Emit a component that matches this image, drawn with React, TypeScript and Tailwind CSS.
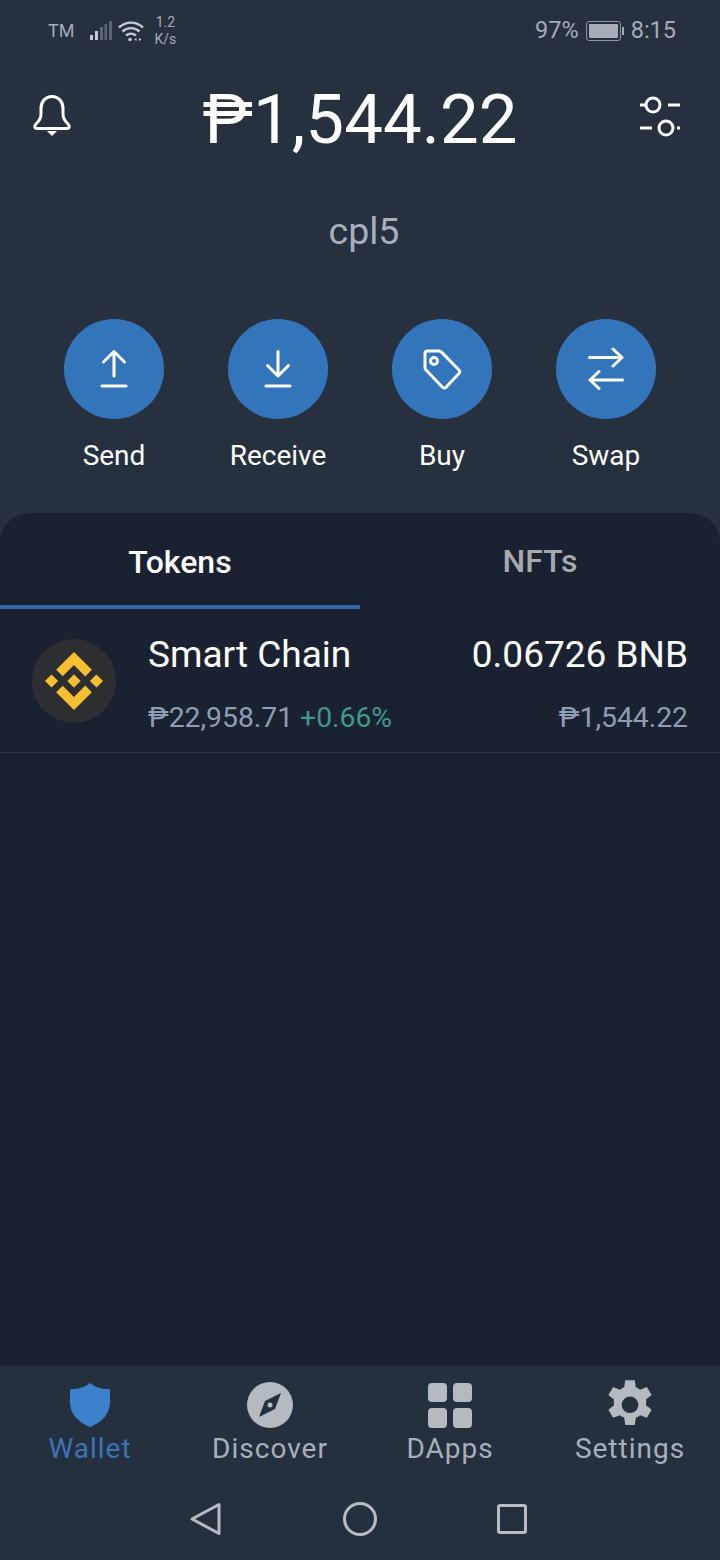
import React from "react";

const PESO = "\u20B1";

function Bell() {
  return (
    <svg width="40" height="50" viewBox="0 0 40 50" fill="none" stroke="white" strokeWidth="3" strokeLinejoin="round">
      <path d="M20 1.500c-6.500 0-11 5-11 12v6c0 4-2 6.500-5 9.500-2 2-1.500 4.500 1 4.500h30c2.500 0 3-2.500 1-4.500-3-3-5-5.500-5-9.500v-6c0-7-4.500-12-11-12z" />
      <path d="M15 36h10l-5 5z" fill="white" stroke="none" />
    </svg>
  );
}

function Sliders() {
  return (
    <svg width="40" height="50" viewBox="0 0 40 50" fill="none" stroke="white" strokeWidth="3">
      <circle cx="13" cy="10" r="7" />
      <path d="M0 10h5M28 10h12" />
      <circle cx="26" cy="33" r="7" />
      <path d="M0 33h12M37 33h3" />
    </svg>
  );
}

function ActionIcon({ kind }: { kind: string }) {
  return (
    <svg width="44" height="44" viewBox="0 0 44 44" fill="none" stroke="white" strokeWidth="3" strokeLinecap="round" strokeLinejoin="round">
      {kind === "send" && <path d="M22 4.500V29M11.500 15L22 4.500 32.500 15M10 39h24" />}
      {kind === "receive" && <path d="M22 4.500V29M11.500 18.500L22 29l10.500-10.500M10 39h24" />}
      {kind === "buy" && (
        <>
          <path d="M5 6.500c0-1.500 1-2.500 2.500-2.500H19c1 0 1.800.4 2.500 1.100L39 23c1 1 1 2.500 0 3.500L26 40.300c-1 1-2.500 1-3.500 0L6 23c-.7-.7-1-1.500-1-2.500z" />
          <circle cx="14" cy="14" r="3.500" />
        </>
      )}
      {kind === "swap" && <path d="M5.500 10.500H38M29 2l9 8.500-9 8.500M38.500 33H6M15 24.500L6 33l9 8.500" />}
    </svg>
  );
}

function ActionButton({ kind, label }: { kind: string; label: string }) {
  return (
    <div className="flex w-[164px] flex-col items-center">
      <div className="flex h-[100px] w-[100px] items-center justify-center rounded-full bg-[#3375bb]">
        <ActionIcon kind={kind} />
      </div>
      <span className="mt-[19px] text-[28px] leading-[36px] text-white">{label}</span>
    </div>
  );
}

function BinanceMark() {
  return (
    <div className="flex h-[84px] w-[84px] shrink-0 items-center justify-center rounded-full bg-[#2d2e32]">
      <svg width="58" height="58" viewBox="0 0 126.610 126.610" fill="#f5c02e">
        <path d="M38.730 53.200l24.590-24.580 24.600 24.600 14.300-14.310L63.320 0 24.430 38.900z" />
        <path d="M0 63.310l14.300-14.310 14.310 14.310-14.310 14.300z" />
        <path d="M38.730 73.410l24.590 24.590 24.600-24.600 14.310 14.290-38.900 38.910-38.910-38.880z" />
        <path d="M98 63.310l14.300-14.310 14.310 14.300-14.310 14.320z" />
        <path d="M77.830 63.300L63.320 48.780 52.590 59.510l-1.240 1.230-2.540 2.540 14.510 14.500 14.510-14.470z" />
      </svg>
    </div>
  );
}

function NavShield() {
  return (
    <svg width="40" height="44" viewBox="0 0 40 44" fill="#3d80cd">
      <path d="M20 0c5 4 11 6 18 6 1.500 0 2 .5 2 2v11c0 12-8 20-20 25C8 39 0 31 0 19V8c0-1.500.5-2 2-2 7 0 13-2 18-6z" />
    </svg>
  );
}

function NavCompass() {
  return (
    <svg width="46" height="46" viewBox="0 0 46 46">
      <circle cx="23" cy="23" r="23" fill="#b5b9c0" />
      <path d="M34 11L28 27 12 35 18 19z" fill="#25303e" />
      <circle cx="23" cy="23" r="2.500" fill="#b5b9c0" />
    </svg>
  );
}

function NavGrid() {
  return (
    <div className="grid h-[45px] w-[44px] grid-cols-2 gap-[6px]">
      <div className="rounded-[4px] bg-[#b5b9c0]" />
      <div className="rounded-[4px] bg-[#b5b9c0]" />
      <div className="rounded-[4px] bg-[#b5b9c0]" />
      <div className="rounded-[4px] bg-[#b5b9c0]" />
    </div>
  );
}

function NavGear() {
  return (
    <svg width="54" height="54" viewBox="0 0 24 24" fill="#b5b9c0">
      <path fillRule="evenodd" d="M14.100 1h-4.200l-.5 3.100c-.7.300-1.300.6-1.900 1.100l-3-1.200-2.100 3.600 2.500 2c-.1.400-.1.800-.1 1.200s0 .9.100 1.300l-2.500 2 2.100 3.600 3-1.200c.6.500 1.200.8 1.900 1.100l.5 3.300h4.200l.5-3.300c.7-.3 1.300-.6 1.900-1.100l3 1.200 2.100-3.600-2.500-2c.1-.4.100-.8.100-1.300s0-.8-.1-1.200l2.500-2-2.100-3.600-3 1.200c-.6-.5-1.200-.8-1.900-1.100zM12 8.200a3.700 3.700 0 1 1 0 7.400 3.700 3.700 0 0 1 0-7.400z" />
    </svg>
  );
}

function NavItem({ icon, label, active }: { icon: React.ReactNode; label: string; active?: boolean }) {
  return (
    <div className="flex flex-col items-center">
      <div className="flex h-[48px] items-center justify-center">{icon}</div>
      <span className={`mt-[3px] text-[28px] leading-[34px] tracking-[1px] ${active ? "text-[#3a74b5]" : "text-[#a8afbb]"}`}>{label}</span>
    </div>
  );
}

function StatusBar() {
  return (
    <div className="flex h-[60px] items-center justify-between pl-[48px] pr-[44px] pt-[2px] text-[#a4acb8]">
      <div className="flex items-center">
        <span className="text-[18px] leading-none">TM</span>
        <svg className="ml-[16px]" width="22" height="22" viewBox="0 0 22 22">
          <rect x="0" y="15" width="3" height="5" fill="#c5cad2" />
          <rect x="5" y="11" width="3" height="9" fill="#c5cad2" />
          <rect x="10" y="7" width="3" height="13" fill="#5d6672" />
          <rect x="14.500" y="4" width="2.500" height="16" fill="#5d6672" />
          <rect x="19" y="1" width="3" height="19" fill="#5d6672" />
        </svg>
        <svg className="ml-[6px]" width="26" height="22" viewBox="0 0 26 22" fill="none" stroke="#c5cad2" strokeWidth="2.400">
          <path d="M1 7.500c7-6.500 17-6.500 24 0M4.500 11.500c5-4.500 12-4.500 17 0M8 15.500c3-2.500 7-2.500 10 0" />
          <circle cx="12" cy="19.500" r="1.800" fill="#c5cad2" stroke="none" />
          <path d="M18.500 18l-2.500 1.500 2.500 1.500zM21 18l2.500 1.500-2.500 1.500z" fill="#c5cad2" stroke="none" />
        </svg>
        <div className="ml-[10px] flex flex-col items-center text-[14px] leading-[17px]">
          <span>1.2</span>
          <span>K/s</span>
        </div>
      </div>
      <div className="flex items-center text-[23.500px] leading-none">
        <span>97%</span>
        <div className="ml-[7px] flex items-center">
          <div className="h-[20px] w-[35px] rounded-[3px] border border-[#8d95a1] p-[2px]">
            <div className="h-full w-full rounded-[1px] bg-[#a6adb8]" />
          </div>
          <div className="ml-[1px] h-[8px] w-[2px] bg-[#a4acb8]" />
        </div>
        <span className="ml-[7px]">8:15</span>
      </div>
    </div>
  );
}

export default function App() {
  return (
    <div className="flex h-[1560px] w-[720px] flex-col overflow-hidden bg-[#26303e] font-['Roboto',sans-serif]">
      <StatusBar />

      <div className="grid h-[120px] grid-cols-[1fr_auto_1fr] items-center pl-[32px] pr-[40px]">
        <Bell />
        <span className="pl-[8px] text-[69px] leading-[80px] text-white">{PESO}1,544.22</span>
        <div className="justify-self-end">
          <Sliders />
        </div>
      </div>

      <div className="mt-[28px] pl-[8px] text-center text-[37.500px] leading-[46px] text-[#a6b0bd]">cpl5</div>

      <div className="mt-[65px] flex justify-center">
        <ActionButton kind="send" label="Send" />
        <ActionButton kind="receive" label="Receive" />
        <ActionButton kind="buy" label="Buy" />
        <ActionButton kind="swap" label="Swap" />
      </div>

      <div className="mt-[39px] flex min-h-0 flex-1 flex-col rounded-t-[30px] bg-[#1a2231]">
        <div className="flex h-[96px] shrink-0">
          <div className="flex w-1/2 items-center justify-center border-b-[4px] border-[#3368a8] pt-[5px] text-[32px] font-medium text-white">Tokens</div>
          <div className="flex w-1/2 items-center justify-center text-[32px] font-medium text-[#a6a9ad]">NFTs</div>
        </div>
        <div className="flex h-[144px] shrink-0 items-center border-b border-[#2b3340] pl-[32px] pr-[32px]">
          <BinanceMark />
          <div className="ml-[32px] flex flex-1 flex-col pt-[7px]">
            <div className="flex justify-between text-[37px] leading-[44px] text-white">
              <span>Smart Chain</span>
              <span>0.06726 BNB</span>
            </div>
            <div className="mt-[24px] flex justify-between text-[28.300px] leading-[34px] text-[#8f9eb5]">
              <span>
                {PESO}22,958.71 <span className="text-[#3f9a8c]">+0.66%</span>
              </span>
              <span>{PESO}1,544.22</span>
            </div>
          </div>
        </div>
      </div>

      <div className="h-[195px] shrink-0 border-t border-[#1c2432] bg-[#25303e] pt-[15px]">
        <div className="grid grid-cols-4">
          <NavItem icon={<NavShield />} label="Wallet" active />
          <NavItem icon={<NavCompass />} label="Discover" />
          <NavItem icon={<NavGrid />} label="DApps" />
          <NavItem icon={<NavGear />} label="Settings" />
        </div>
        <div className="mt-[35px] flex items-center justify-center pr-[4px]">
          <svg className="mr-[121px]" width="32" height="36" viewBox="0 0 32 36" fill="none" stroke="#b8bcc2" strokeWidth="3" strokeLinejoin="round">
            <path d="M29 3.500L2 18l27 14.500z" />
          </svg>
          <div className="mr-[120px] h-[34px] w-[34px] rounded-full border-[3px] border-[#b8bcc2]" />
          <div className="h-[30px] w-[30px] rounded-[3px] border-[3px] border-[#b8bcc2]" />
        </div>
      </div>
    </div>
  );
}
